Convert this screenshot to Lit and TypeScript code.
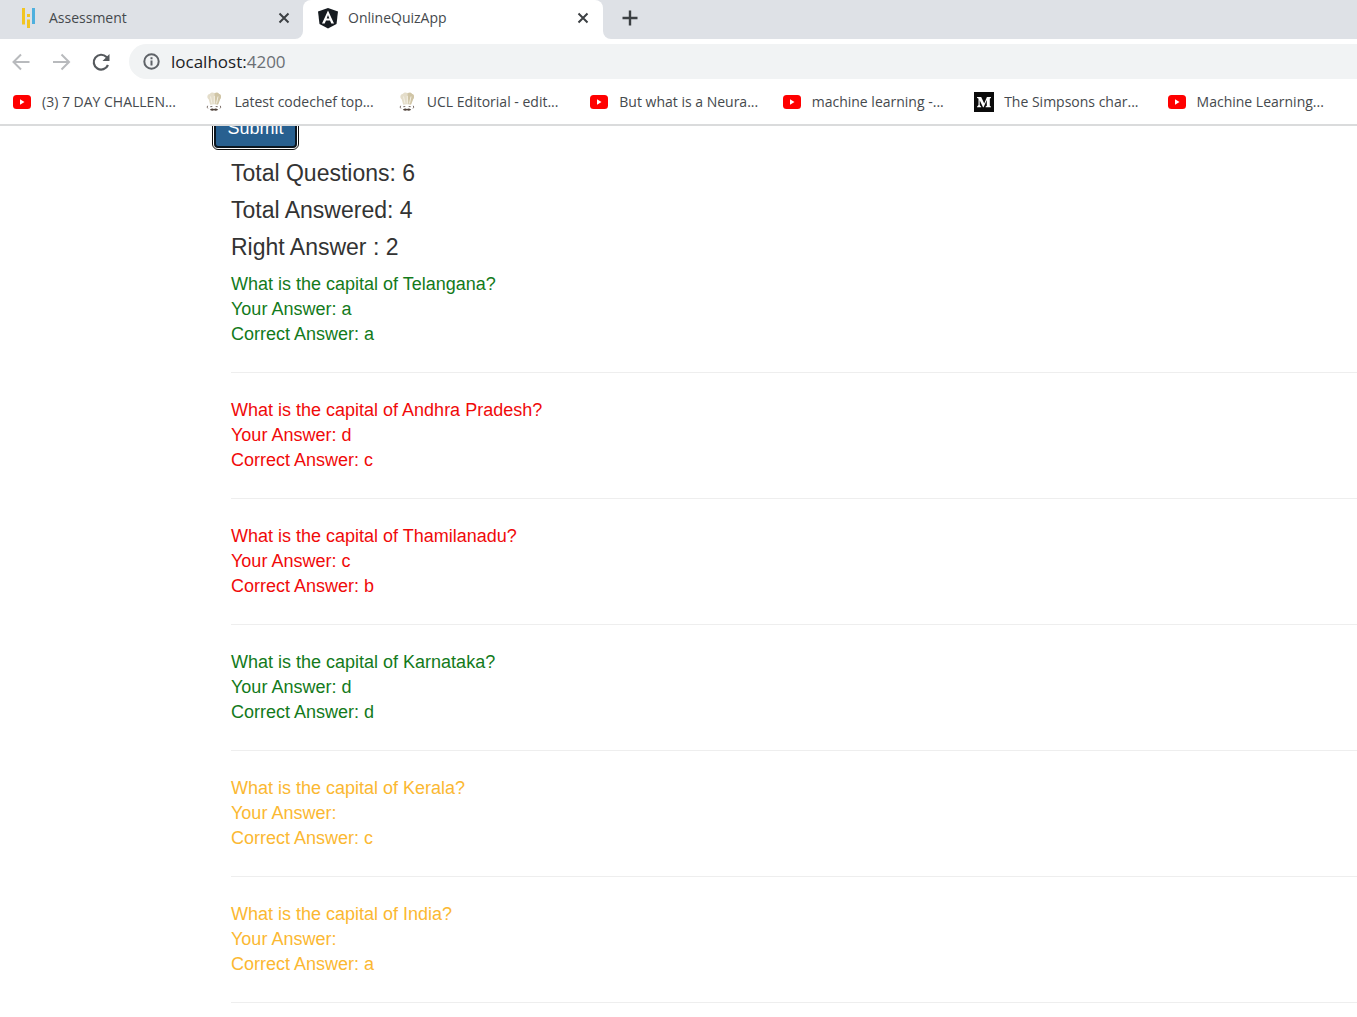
import { LitElement, html, css, svg } from "lit";
import { customElement } from "lit/decorators.js";

type Status = "right" | "wrong" | "skipped";
interface Result { question: string; answer: string; correct: string; status: Status; }
interface Bookmark { icon: "youtube" | "chef" | "medium"; label: string; }

const results: Result[] = [
  { question: "What is the capital of Telangana?", answer: "a", correct: "a", status: "right" },
  { question: "What is the capital of Andhra Pradesh?", answer: "d", correct: "c", status: "wrong" },
  { question: "What is the capital of Thamilanadu?", answer: "c", correct: "b", status: "wrong" },
  { question: "What is the capital of Karnataka?", answer: "d", correct: "d", status: "right" },
  { question: "What is the capital of Kerala?", answer: "", correct: "c", status: "skipped" },
  { question: "What is the capital of India?", answer: "", correct: "a", status: "skipped" },
];

const bookmarks: Bookmark[] = [
  { icon: "youtube", label: "(3) 7 DAY CHALLEN..." },
  { icon: "chef", label: "Latest codechef top..." },
  { icon: "chef", label: "UCL Editorial - edit..." },
  { icon: "youtube", label: "But what is a Neura..." },
  { icon: "youtube", label: "machine learning -..." },
  { icon: "medium", label: "The Simpsons char..." },
  { icon: "youtube", label: "Machine Learning..." },
];

const paths = {
  youtube: svg`<rect x="1" y="3" width="18" height="14" rx="3.500" fill="#f00"/><path d="M8 7.200 12.500 10 8 12.800Z" fill="#fff"/>`,
  chef: svg`<path d="M6.200 12.800 4.800 7.500C2.600 6 3 2.400 5.600 2 6.500.4 9 0 10.300 1 12 0 14.500.4 15 2 17.600 2.400 17.600 6 16 7.500L14 12.800Q10 11.600 6.200 12.800Z" fill="#e4ddca"/><path d="M10.500 1.500C12 .2 14.500.4 15 2 17.600 2.400 17.600 6 16 7.500L14 12.500 11.500 12Z" fill="#d0c5a6"/><path d="M8 11.500 6.500 4.500M10.300 11.500V4M12.500 11.500 14 4.500" stroke="#f4f0e4" fill="none"/><path d="M3.600 13.800Q2.600 15.300 3.900 16.400M16.300 13.800Q17.300 15.300 16 16.400M6.300 14.700 8.300 14.500M11.700 14.500 13.700 14.700" stroke="#7d706a" fill="none"/><path d="M10 17Q8 15.900 5.800 17.800 8.300 19.300 10 18.200 11.700 19.300 14.200 17.800 12 15.900 10 17Z" fill="#50423a"/>`,
  medium: svg`<rect width="20" height="20" fill="#0b0b0b"/><path d="M3 5H7.200L10.200 11.500 12.900 5H17V5.700L15.800 6.700V13.700L17 14.700V15.300H11.500V14.700L12.800 13.700V8L9.600 15.300H9L5.700 8.200V13L7.200 14.700V15.300H3V14.700L4.500 13V6.700L3 5.700Z" fill="#fff"/>`,
};

const close = html`<svg class="glyph" viewBox="0 0 12 12" aria-hidden="true"><path d="M1.500 1.500 10.500 10.500M10.500 1.500 1.500 10.500" stroke="#3c4043" stroke-width="2"/></svg>`;

@customElement("browser-chrome")
export class BrowserChrome extends LitElement {
  static styles = css`
    :host { display: block; font-family: "Open Sans", "Noto Sans", sans-serif; font-size: 14px; line-height: 20px; color: #45494d; border-bottom: 2px solid #dadbdc; }
    button { border: 0; background: none; padding: 0; display: flex; align-items: center; justify-content: center; }
    .tabs { display: flex; height: 39px; background: #fff; }
    .tab { display: flex; align-items: center; width: 300px; box-sizing: border-box; padding: 0 12px 3px 14px; gap: 9px; }
    .idle { width: 303px; padding: 0 11px 3px 18px; background: #dee1e6; border-bottom-right-radius: 8px; }
    .active { background: #dee1e6; padding: 0; }
    .face { display: flex; align-items: center; gap: 9px; width: 100%; height: 39px; box-sizing: border-box; padding: 0 12px 3px 14px; background: #fff; border-radius: 8px 8px 0 0; }
    .rest { flex: 1; background: #dee1e6; border-bottom-left-radius: 8px; display: flex; align-items: center; padding: 0 0 3px 17px; }
    .title { flex: 1; }
    .fav { width: 22px; height: 22px; flex: none; }
    .glyph { width: 12px; height: 12px; display: block; }
    .close { width: 16px; height: 20px; }
    .bar { display: flex; align-items: center; height: 45px; padding-left: 9px; box-sizing: border-box; }
    .nav { width: 24px; height: 24px; margin-right: 16px; }
    .nav svg { width: 24px; height: 24px; }
    .address { flex: 1; display: flex; align-items: center; gap: 10px; height: 35px; background: #f1f3f4; border-radius: 18px 0 0 18px; padding-left: 13px; font-size: 17px; color: #202124; }
    .address svg { width: 19px; height: 19px; }
    .port { color: #6b6f74; }
    .marks { display: grid; grid-template-columns: repeat(7, 1fr); height: 40px; padding-left: 10px; align-items: center; }
    .mark { display: flex; align-items: center; gap: 10px; padding: 0 0 4px 2px; color: inherit; text-decoration: none; white-space: nowrap; }
    .mark svg { width: 20px; height: 20px; flex: none; }
  `;
  render() {
    return html`
      <div class="tabs">
        <div class="tab idle">
          <svg class="fav" viewBox="0 0 22 22" aria-hidden="true"><path d="M5.500 1V17.500M10.500 12.500V21" stroke="#f2c522" stroke-width="3"/><path d="M10.500 7V10" stroke="#f2c522" stroke-width="3"/><path d="M15.500 1V17" stroke="#4fb0de" stroke-width="3"/></svg>
          <span class="title">Assessment</span>
          <button class="close" aria-label="Close tab">${close}</button>
        </div>
        <div class="tab active">
          <div class="face">
            <svg class="fav" viewBox="0 0 22 22" aria-hidden="true"><path d="M11 1 21 4.500 19.500 17 11 21.500 2.500 17 1 4.500Z" fill="#161b20"/><path d="M11 3.500 5 16.500H7.700L9 13.500H13L14.300 16.500H17ZM11 8 12.300 11.400H9.700Z" fill="#fff" fill-rule="evenodd"/></svg>
            <span class="title">OnlineQuizApp</span>
            <button class="close" aria-label="Close tab">${close}</button>
          </div>
        </div>
        <div class="rest">
          <button aria-label="New tab"><svg width="20" height="20" viewBox="0 0 20 20"><path d="M10 2.500V17.500M2.500 10H17.500" stroke="#3c4043" stroke-width="2.400"/></svg></button>
        </div>
      </div>
      <div class="bar">
        <button class="nav" aria-label="Back"><svg viewBox="0 0 24 24"><path d="M20.500 12H5M12 4.500 4.500 12 12 19.500" fill="none" stroke="#b8babd" stroke-width="2"/></svg></button>
        <button class="nav" aria-label="Forward"><svg viewBox="0 0 24 24"><path d="M4 12H19.500M12.500 4.500 20 12 12.500 19.500" fill="none" stroke="#b8babd" stroke-width="2"/></svg></button>
        <button class="nav" aria-label="Reload"><svg viewBox="0 0 24 24"><path d="M19 15A7.400 7.400 0 1 1 17.500 7L19 8.500" fill="none" stroke="#55595d" stroke-width="2.200"/><path d="M20.500 4V11H13.500Z" fill="#55595d"/></svg></button>
        <div class="address">
          <svg viewBox="0 0 19 19" aria-hidden="true"><circle cx="9.500" cy="9.500" r="7.200" fill="none" stroke="#5f6368" stroke-width="2"/><path d="M9.500 8.500V13.500M9.500 5.200V7.200" stroke="#5f6368" stroke-width="2"/></svg>
          <span>localhost:<span class="port">4200</span></span>
        </div>
      </div>
      <nav class="marks" aria-label="Bookmarks">
        ${bookmarks.map((b) => html`<a class="mark" href="#"><svg viewBox="0 0 20 20" aria-hidden="true">${paths[b.icon]}</svg><span>${b.label}</span></a>`)}
      </nav>`;
  }
}

@customElement("app-root")
export class AppRoot extends LitElement {
  static styles = css`
    :host { display: block; min-height: 100vh; background: #fff; font-family: "Liberation Sans", Arial, sans-serif; color: #333; }
    .page { overflow: hidden; padding-left: 212px; }
    .submit { display: block; margin: -18px 0 0 2px; height: 40px; width: 83px; padding: 0; border: 2px solid #0b1620; border-radius: 4px; background: #286090; color: #fff; font: 18px/25px "Liberation Sans", Arial, sans-serif; outline: 1px solid #101010; outline-offset: 1px; }
    .report { padding: 13px 0 0 19px; }
    .total { margin: 0 0 12px; font-size: 23px; line-height: 25px; font-weight: 400; }
    .result { font-size: 18px; line-height: 25px; border-bottom: 1px solid #eee; padding-bottom: 25px; margin-bottom: 25px; }
    .result p { margin: 0; }
    .right { color: #137a1b; }
    .wrong { color: #f00a0a; }
    .skipped { color: #fbb832; }
  `;
  render() {
    const answered = results.filter((r) => r.answer).length;
    const right = results.filter((r) => r.status === "right").length;
    return html`
      <browser-chrome></browser-chrome>
      <main class="page">
        <button class="submit">Submit</button>
        <section class="report">
          <h3 class="total">Total Questions: ${results.length}</h3>
          <h3 class="total">Total Answered: ${answered}</h3>
          <h3 class="total">Right Answer : ${right}</h3>
          ${results.map((r) => html`<div class="result ${r.status}">
            <p>${r.question}</p>
            <p>Your Answer: ${r.answer}</p>
            <p>Correct Answer: ${r.correct}</p>
          </div>`)}
        </section>
      </main>`;
  }
}
